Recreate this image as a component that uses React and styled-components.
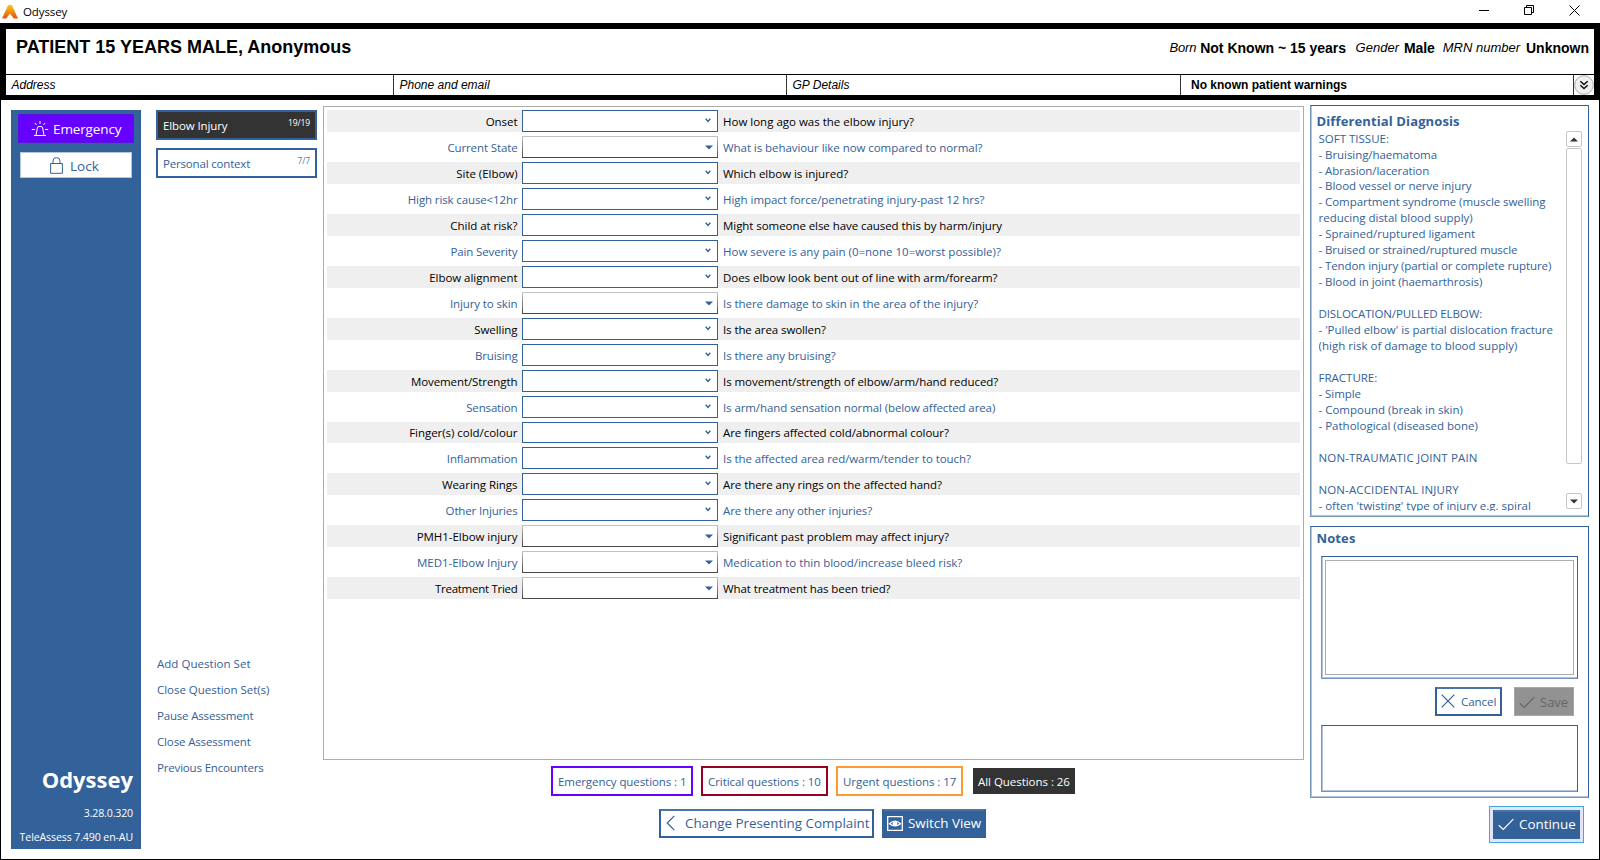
import React from "react";
import styled, { createGlobalStyle, css } from "styled-components";

const BLUE = "#336199";
const UI = '"Open Sans", "Noto Sans", sans-serif';
const ARIAL = '"Liberation Sans", Arial, sans-serif';

const Global = createGlobalStyle`
  * { box-sizing: border-box; }
  html, body { margin: 0; padding: 0; background: #fff; }
  body { font-family: ${UI}; font-size: 11.5px; color: ${BLUE}; overflow: hidden; }
  button { font: inherit; margin: 0; padding: 0; background: none; border: 0; color: inherit; }
  svg { flex: none; display: block; }
`;

/* One line of text; $ls tunes tracking. */
const Text = styled.span`
  white-space: pre;
  letter-spacing: ${(p) => p.$ls || 0}px;
`;

const Window = styled.div`
  width: 1600px;
  height: 860px;
  display: flex;
  flex-direction: column;
  background: #fff;
`;

const TitleBar = styled.header`
  height: 23px;
  flex: none;
  display: flex;
  align-items: center;
  padding-left: 2px;
  color: #000;
`;
const AppName = styled(Text)`
  margin-left: 5px;
  flex: 1;
`;
const WindowControls = styled.div`
  display: flex;
  align-items: center;
  align-self: flex-start;
  height: 21px;
  padding-right: 20px;
  gap: 34px;
`;

const Banner = styled.section`
  flex: none;
  height: 77px;
  border: 6px solid #000;
  border-bottom-width: 5px;
  font-family: ${ARIAL};
  color: #000;
  display: flex;
  flex-direction: column;
`;
const BannerTop = styled.div`
  height: 46px;
  flex: none;
  border-bottom: 1px solid #000;
  display: flex;
  justify-content: space-between;
  padding: 7px 5px 0 10px;
`;
const PatientName = styled.h1`
  margin: 0;
  font-size: 18px;
  line-height: 22px;
  font-weight: 700;
`;
const Facts = styled.div`
  display: flex;
  padding-top: 2px;
  font-size: 14px;
  line-height: 20px;
`;
const FactLabel = styled(Text)`
  font-style: italic;
  font-size: 13px;
  margin-left: ${(p) => p.$ml || 0}px;
`;
const FactValue = styled(Text)`
  font-weight: 700;
  margin-left: ${(p) => p.$ml || 4}px;
`;
const BannerRow = styled.div`
  flex: 1;
  min-height: 0;
  display: flex;
  font-size: 12px;
  line-height: 20px;
`;
const BannerCell = styled.div`
  width: ${(p) => p.$w}px;
  border-right: 1px solid #333;
  padding-left: ${(p) => (p.$strong ? 10 : 5.5)}px;
  font-style: ${(p) => (p.$strong ? "normal" : "italic")};
  font-weight: ${(p) => (p.$strong ? 700 : 400)};
`;
const ExpandButton = styled.button`
  flex: 1;
  display: flex;
  align-items: center;
  justify-content: center;
`;

const Main = styled.main`
  flex: 1;
  display: flex;
  border: 1px solid #000;
  border-top: 0;
  padding: 5px 10px 0 10px;
`;

const Sidebar = styled.aside`
  width: 130px;
  height: 739px;
  margin-top: 5px;
  background: ${BLUE};
  color: #fff;
  display: flex;
  flex-direction: column;
  align-items: center;
  padding-top: 4px;
`;
const EmergencyButton = styled.button`
  width: 116px;
  height: 29px;
  background: #6600ff;
  border: 1px solid #5a12e0;
  color: #fff;
  font-size: 13.5px;
  display: flex;
  align-items: center;
  padding-left: 12px;
  gap: 4px;
`;
const LockButton = styled.button`
  width: 112px;
  height: 26px;
  margin-top: 9px;
  background: #fff;
  border: 1px solid #b4c6dc;
  color: ${BLUE};
  font-size: 13.5px;
  display: flex;
  align-items: center;
  padding: 1px 0 0 29px;
  gap: 7px;
`;
const Version = styled.div`
  margin-top: auto;
  align-self: stretch;
  padding: 0 8px 0 0;
  display: flex;
  flex-direction: column;
  align-items: flex-end;
  line-height: 24px;
  font-size: 10.6px;
`;
const Brand = styled.div`
  font-size: 22px;
  font-weight: 700;
  line-height: 32px;
  margin-bottom: 6px;
`;

const SetNav = styled.nav`
  width: 161px;
  margin: 5px 6px 0 15px;
  display: flex;
  flex-direction: column;
  height: 739px;
`;
const SetTab = styled.button`
  height: 30px;
  margin-bottom: 8px;
  border: 2px solid ${BLUE};
  background: ${(p) => (p.$active ? "#333" : "#fff")};
  color: ${(p) => (p.$active ? "#fff" : BLUE)};
  display: flex;
  justify-content: space-between;
  padding: 0 5px;
  line-height: 28px;
`;
const SetCount = styled.span`
  font-size: 8.5px;
  line-height: 22px;
  letter-spacing: -0.1px;
  opacity: ${(p) => (p.$active ? 1 : 0.85)};
`;
const Links = styled.div`
  margin-top: auto;
  margin-bottom: 68px;
  display: flex;
  flex-direction: column;
  align-items: flex-start;
  padding-left: 1px;
`;
const LinkButton = styled.button`
  height: 26px;
  line-height: 26px;
`;

const Center = styled.section`
  width: 981px;
  display: flex;
  flex-direction: column;
  align-items: center;
`;
const QuestionPanel = styled.div`
  margin-top: 1px;
  width: 981px;
  height: 654px;
  border: 1px solid #acacac;
  padding: 3px;
`;
const QuestionRow = styled.div`
  height: ${(p) => (p.$short ? 21 : 22)}px;
  margin-bottom: 4px;
  display: flex;
  line-height: ${(p) => (p.$short ? 21 : 23)}px;
  background: ${(p) => (p.$shaded ? "#efefef" : "#fff")};
  color: ${(p) => (p.$shaded ? "#000" : BLUE)};
`;
const QuestionLabel = styled.div`
  width: 195px;
  padding-right: 4.5px;
  text-align: right;
`;
const QuestionText = styled.div`
  padding-left: 5px;
`;
const Combo = styled.div`
  width: 196px;
  height: 100%;
  background: #fff;
  border: 1px solid ${BLUE};
  color: ${BLUE};
  display: flex;
  justify-content: flex-end;
  ${(p) =>
    p.$multi
      ? css`
          border-image: linear-gradient(#c4c4c4, #444) 1;
          padding: 8px 4px 0 0;
        `
      : css`
          padding: 7px 6px 0 0;
        `}
`;

const Filters = styled.div`
  margin-top: 6px;
  display: flex;
  align-items: center;
  gap: 8px;
  align-self: flex-start;
  padding-left: 228px;
`;
const FilterButton = styled.button`
  width: ${(p) => p.$w}px;
  height: ${(p) => (p.$color ? 30 : 26)}px;
  ${(p) =>
    p.$color
      ? css`
          border: 2px solid ${p.$color};
        `
      : css`
          background: #333;
          color: #fff;
          margin-left: 2px;
        `}
  display: flex;
  align-items: center;
  padding: 1px 0 0 5px;
`;
const Actions = styled.div`
  margin-top: 13px;
  display: flex;
  gap: 8px;
  align-self: flex-start;
  padding-left: 336px;
`;
const ActionButton = styled.button`
  width: ${(p) => p.$w}px;
  height: 29px;
  border: 2px solid ${BLUE};
  border-top-color: #4a73a6;
  background: ${(p) => (p.$filled ? BLUE : "#fff")};
  color: ${(p) => (p.$filled ? "#fff" : BLUE)};
  font-size: ${(p) => p.$fs || 13.4}px;
  display: flex;
  align-items: center;
  padding: 0 0 1px ${(p) => p.$pl || 4}px;
  gap: ${(p) => p.$gap || 5}px;
`;

const Right = styled.section`
  width: 279px;
  margin-left: 6px;
  display: flex;
  flex-direction: column;
`;
const Panel = styled.div`
  height: ${(p) => p.$h}px;
  border: 1px solid ${BLUE};
  border-left-color: #7695bd;
  border-bottom-color: #7695bd;
  box-shadow: inset 1px -1px 0 #b1c3da;
  margin-bottom: ${(p) => p.$mb || 0}px;
  padding-left: 5.5px;
`;
const PanelTitle = styled.h2`
  margin: 0;
  font-size: 13px;
  font-weight: 700;
  line-height: 18px;
  padding-top: ${(p) => p.$pt}px;
  letter-spacing: 0.12px;
`;
const DiagnosisBody = styled.div`
  display: flex;
  justify-content: space-between;
  padding: 0 6px 0 2px;
`;
const DiagnosisList = styled.div`
  height: 381px;
  padding-top: 0.6px;
  overflow: hidden;
  line-height: 15.96px;
`;
const DiagnosisLine = styled.div`
  height: 15.96px;
  white-space: pre;
  letter-spacing: ${(p) => p.$ls || 0}px;
`;
const ScrollBar = styled.div`
  width: 16px;
  margin-top: 1px;
  display: flex;
  flex-direction: column;
`;
const ScrollArrow = styled.div`
  height: 16px;
  border: 1px solid #c6c6c6;
  border-radius: 2px;
  display: flex;
  align-items: center;
  justify-content: center;
`;
const ScrollThumb = styled.div`
  height: 316px;
  margin: 1px 0 29px;
  border: 1px solid #c6c6c6;
  border-radius: 2px;
`;

const NoteBox = styled.div`
  width: 257px;
  height: ${(p) => p.$h}px;
  margin: ${(p) => p.$mt}px 0 0 4.5px;
  border: 1px solid ${BLUE};
  border-left-color: #7695bd;
  border-bottom-color: #7695bd;
  box-shadow: inset 1px -1px 0 #b1c3da;
  padding: 3px;
`;
const NoteInput = styled.div`
  height: 100%;
  border: 1px solid #acacac;
`;
const NoteActions = styled.div`
  display: flex;
  justify-content: flex-end;
  gap: 12px;
  margin-top: 8px;
  padding-right: 14px;
`;
const SaveButton = styled.button`
  width: 60px;
  height: 29px;
  background: #929292;
  border: 1px solid #a8a8a8;
  color: #666;
  font-size: 13px;
  display: flex;
  align-items: center;
  padding: 1px 0 0 4px;
  gap: 5px;
`;
const ContinueFrame = styled.div`
  align-self: flex-end;
  margin: 8px 5px 0 0;
  border: 1px solid #3fa9dc;
  background: #e3e3fa;
  padding: 3px;
`;

const Icon = ({ w, h, sw = 1, children }) => (
  <svg width={w} height={h} viewBox={`0 0 ${w} ${h}`} fill="none" stroke="currentColor" strokeWidth={sw}>
    {children}
  </svg>
);
const Check = () => (
  <Icon w={16} h={13} sw={1.2}><path d="M.8 7.2 5.3 11.4 15.3 1.2" /></Icon>
);
const Logo = () => (
  <svg width="16" height="14" viewBox="0 0 16 14">
    <defs>
      <linearGradient id="flame" x1="0" y1="0" x2="0" y2="1">
        <stop offset="0" stopColor="#fdc70c" />
        <stop offset="1" stopColor="#e2510f" />
      </linearGradient>
    </defs>
    <path d="M6.2 0h3.6L16 13.6h-4.2L8 8.6 4.2 13.6H0Z" fill="url(#flame)" />
  </svg>
);
const ChevronMark = () => (
  <Icon w={6} h={5} sw={1.4}><path d="M.7 .8 3 3.4 5.3 .8" /></Icon>
);
const TriangleMark = () => (
  <svg width="8" height="5" viewBox="0 0 8 5"><path d="M0 .4h8L4 4.4Z" fill={BLUE} /></svg>
);

const QUESTIONS = [
  { label: "Onset", text: "How long ago was the elbow injury?", tls: 0 },
  { label: "Current State", lls: -0.12, text: "What is behaviour like now compared to normal?", multi: true },
  { label: "Site (Elbow)", text: "Which elbow is injured?", tls: -0.03 },
  { label: "High risk cause<12hr", lls: -0.12, text: "High impact force/penetrating injury-past 12 hrs?", tls: -0.03 },
  { label: "Child at risk?", text: "Might someone else have caused this by harm/injury" },
  { label: "Pain Severity", lls: -0.12, text: "How severe is any pain (0=none 10=worst possible)?", tls: 0 },
  { label: "Elbow alignment", text: "Does elbow look bent out of line with arm/forearm?", tls: -0.04 },
  { label: "Injury to skin", lls: -0.12, text: "Is there damage to skin in the area of the injury?", multi: true },
  { label: "Swelling", text: "Is the area swollen?", tls: -0.1 },
  { label: "Bruising", lls: -0.15, text: "Is there any bruising?" },
  { label: "Movement/Strength", lls: -0.08, text: "Is movement/strength of elbow/arm/hand reduced?" },
  { label: "Sensation", lls: -0.15, text: "Is arm/hand sensation normal (below affected area)", tls: -0.1 },
  { label: "Finger(s) cold/colour", text: "Are fingers affected cold/abnormal colour?", short: true },
  { label: "Inflammation", lls: -0.12, text: "Is the affected area red/warm/tender to touch?", tls: -0.08 },
  { label: "Wearing Rings", text: "Are there any rings on the affected hand?" },
  { label: "Other Injuries", lls: -0.15, text: "Are there any other injuries?", tls: -0.1 },
  { label: "PMH1-Elbow injury", text: "Significant past problem may affect injury?", multi: true, tls: -0.03 },
  { label: "MED1-Elbow Injury", text: "Medication to thin blood/increase bleed risk?", multi: true, tls: -0.03 },
  { label: "Treatment Tried", lls: -0.28, text: "What treatment has been tried?", multi: true, tls: -0.09 },
];

const DIAGNOSES = [
  ["SOFT TISSUE:", 0],
  ["- Bruising/haematoma"],
  ["- Abrasion/laceration"],
  ["- Blood vessel or nerve injury"],
  ["- Compartment syndrome (muscle swelling"],
  ["reducing distal blood supply)", 0],
  ["- Sprained/ruptured ligament", 0],
  ["- Bruised or strained/ruptured muscle", -0.11],
  ["- Tendon injury (partial or complete rupture)", -0.09],
  ["- Blood in joint (haemarthrosis)"],
  [""],
  ["DISLOCATION/PULLED ELBOW:", -0.1],
  ["- 'Pulled elbow' is partial dislocation fracture", -0.03],
  ["(high risk of damage to blood supply)", 0.02],
  [""],
  ["FRACTURE:", 0],
  ["- Simple"],
  ["- Compound (break in skin)", 0],
  ["- Pathological (diseased bone)", 0],
  [""],
  ["NON-TRAUMATIC JOINT PAIN", 0.14],
  [""],
  ["NON-ACCIDENTAL INJURY", 0.12],
  ["- often 'twisting' type of injury e.g. spiral", 0],
];

const LINKS = [
  ["Add Question Set", 0.03],
  ["Close Question Set(s)", -0.03],
  ["Pause Assessment", -0.18],
  ["Close Assessment", -0.14],
  ["Previous Encounters", -0.17],
];

export default function App() {
  return (
    <Window>
      <Global />
      <TitleBar>
        <Logo />
        <AppName $ls={-0.1}>Odyssey</AppName>
        <WindowControls>
          <Icon w={11} h={11}><path d="M0 5.5h10" /></Icon>
          <Icon w={11} h={11}><path d="M.5 2.5h7v7h-7zM2.5 2.5v-2h7v7h-2" /></Icon>
          <Icon w={11} h={11}><path d="M.5.5l10 10M10.5.5l-10 10" /></Icon>
        </WindowControls>
      </TitleBar>

      <Banner>
        <BannerTop>
          <PatientName>PATIENT 15 YEARS MALE, Anonymous</PatientName>
          <Facts>
            <FactLabel $ls={-0.2}>Born</FactLabel>
            <FactValue>Not Known ~ 15 years</FactValue>
            <FactLabel $ml={9.5}>Gender</FactLabel>
            <FactValue $ml={5} $ls={-0.1}>Male</FactValue>
            <FactLabel $ml={8}>MRN number</FactLabel>
            <FactValue $ml={6}>Unknown</FactValue>
          </Facts>
        </BannerTop>
        <BannerRow>
          <BannerCell $w={388}>Address</BannerCell>
          <BannerCell $w={393}>Phone and email</BannerCell>
          <BannerCell $w={394}>GP Details</BannerCell>
          <BannerCell $w={393} $strong>No known patient warnings</BannerCell>
          <ExpandButton>
            <svg width="20" height="20" viewBox="0 0 20 20">
              <circle cx="10" cy="10" r="9.3" fill="#f0f0f0" stroke="#aaa" />
              <path d="M6.3 6.2 10 9.6l3.7-3.4M6.3 10.2 10 13.6l3.7-3.4" fill="none" stroke="#111" strokeWidth="1.5" />
            </svg>
          </ExpandButton>
        </BannerRow>
      </Banner>

      <Main>
        <Sidebar>
          <EmergencyButton>
            <Icon w={18} h={16}>
              <path d="M3 14.5h12M5 14.5 6.3 7Q6.5 5.5 8 5.5h2Q11.5 5.5 11.7 7L13 14.5M9 0v3M3.8 2l1.7 2M14.2 2l-1.7 2M.8 8.5h3M14.2 8.5h3" />
            </Icon>
            <Text $ls={-0.12}>Emergency</Text>
          </EmergencyButton>
          <LockButton>
            <Icon w={13} h={17}>
              <path d="M.6 6.5h11.8v9.8H.6zM3 6.5V4.1a3.5 3.5 0 0 1 7 0v2.4" />
            </Icon>
            <Text>Lock</Text>
          </LockButton>
          <Version>
            <Brand>Odyssey</Brand>
            <Text $ls={-0.15}>3.28.0.320</Text>
            <Text $ls={-0.12}>TeleAssess 7.490 en-AU</Text>
          </Version>
        </Sidebar>

        <SetNav>
          <SetTab $active><Text $ls={-0.12}>Elbow Injury</Text><SetCount $active>19/19</SetCount></SetTab>
          <SetTab><Text $ls={-0.18}>Personal context</Text><SetCount>7/7</SetCount></SetTab>
          <Links>
            {LINKS.map(([label, ls]) => (
              <LinkButton key={label}><Text $ls={ls}>{label}</Text></LinkButton>
            ))}
          </Links>
        </SetNav>

        <Center>
          <QuestionPanel>
            {QUESTIONS.map(({ label, text, multi, short, lls = -0.04, tls = -0.06 }, i) => (
              <QuestionRow key={label} $shaded={i % 2 === 0} $short={short}>
                <QuestionLabel><Text $ls={lls}>{label}</Text></QuestionLabel>
                <Combo $multi={multi}>{multi ? <TriangleMark /> : <ChevronMark />}</Combo>
                <QuestionText><Text $ls={tls}>{text}</Text></QuestionText>
              </QuestionRow>
            ))}
          </QuestionPanel>
          <Filters>
            <FilterButton $w={142} $color="#6600ff"><Text $ls={-0.08}>Emergency questions : 1</Text></FilterButton>
            <FilterButton $w={127} $color="#990026"><Text $ls={-0.06}>Critical questions : 10</Text></FilterButton>
            <FilterButton $w={127} $color="#ff9933"><Text $ls={-0.06}>Urgent questions : 17</Text></FilterButton>
            <FilterButton $w={102}><Text $ls={-0.04}>All Questions : 26</Text></FilterButton>
          </Filters>
          <Actions>
            <ActionButton $w={215} $gap={10} $pl={5}>
              <Icon w={9} h={16} sw={1.2}><path d="M8.3.8 1.2 8l7.1 7.2" /></Icon>
              <Text $ls={-0.02}>Change Presenting Complaint</Text>
            </ActionButton>
            <ActionButton $w={104} $filled $pl={3}>
              <Icon w={16} h={15} sw={1.3}>
                <path d="M.7.7h14.6v13.6H.7z" />
                <path d="M2.5 7.8Q8 2.5 13.5 7.8 8 12 2.5 7.8Z" />
                <circle cx="8" cy="7.5" r="1.8" fill="currentColor" />
              </Icon>
              <Text>Switch View</Text>
            </ActionButton>
          </Actions>
        </Center>

        <Right>
          <Panel $h={412} $mb={9}>
            <PanelTitle $pt={6}>Differential Diagnosis</PanelTitle>
            <DiagnosisBody>
              <DiagnosisList>
                {DIAGNOSES.map(([line, ls = -0.06], i) => (
                  <DiagnosisLine key={i} $ls={ls}>{line}</DiagnosisLine>
                ))}
              </DiagnosisList>
              <ScrollBar>
                <ScrollArrow><svg width="8" height="5" viewBox="0 0 8 5"><path d="M0 4.5h8L4 .5Z" fill="#333" /></svg></ScrollArrow>
                <ScrollThumb />
                <ScrollArrow><svg width="8" height="5" viewBox="0 0 8 5"><path d="M0 .5h8L4 4.5Z" fill="#333" /></svg></ScrollArrow>
              </ScrollBar>
            </DiagnosisBody>
          </Panel>
          <Panel $h={272}>
            <PanelTitle $pt={2}>Notes</PanelTitle>
            <NoteBox $h={123} $mt={9}><NoteInput /></NoteBox>
            <NoteActions>
              <ActionButton $w={67} $fs={11.6} $gap={6} $pl={4}>
                <Icon w={14} h={14} sw={1.2}><path d="M.7.7l12.6 12.6M13.3.7.7 13.3" /></Icon>
                <Text $ls={-0.1}>Cancel</Text>
              </ActionButton>
              <SaveButton><Check /><Text>Save</Text></SaveButton>
            </NoteActions>
            <NoteBox $h={67} $mt={9} />
          </Panel>
          <ContinueFrame>
            <ActionButton $w={87} $filled $pl={3}><Check /><Text>Continue</Text></ActionButton>
          </ContinueFrame>
        </Right>
      </Main>
    </Window>
  );
}
